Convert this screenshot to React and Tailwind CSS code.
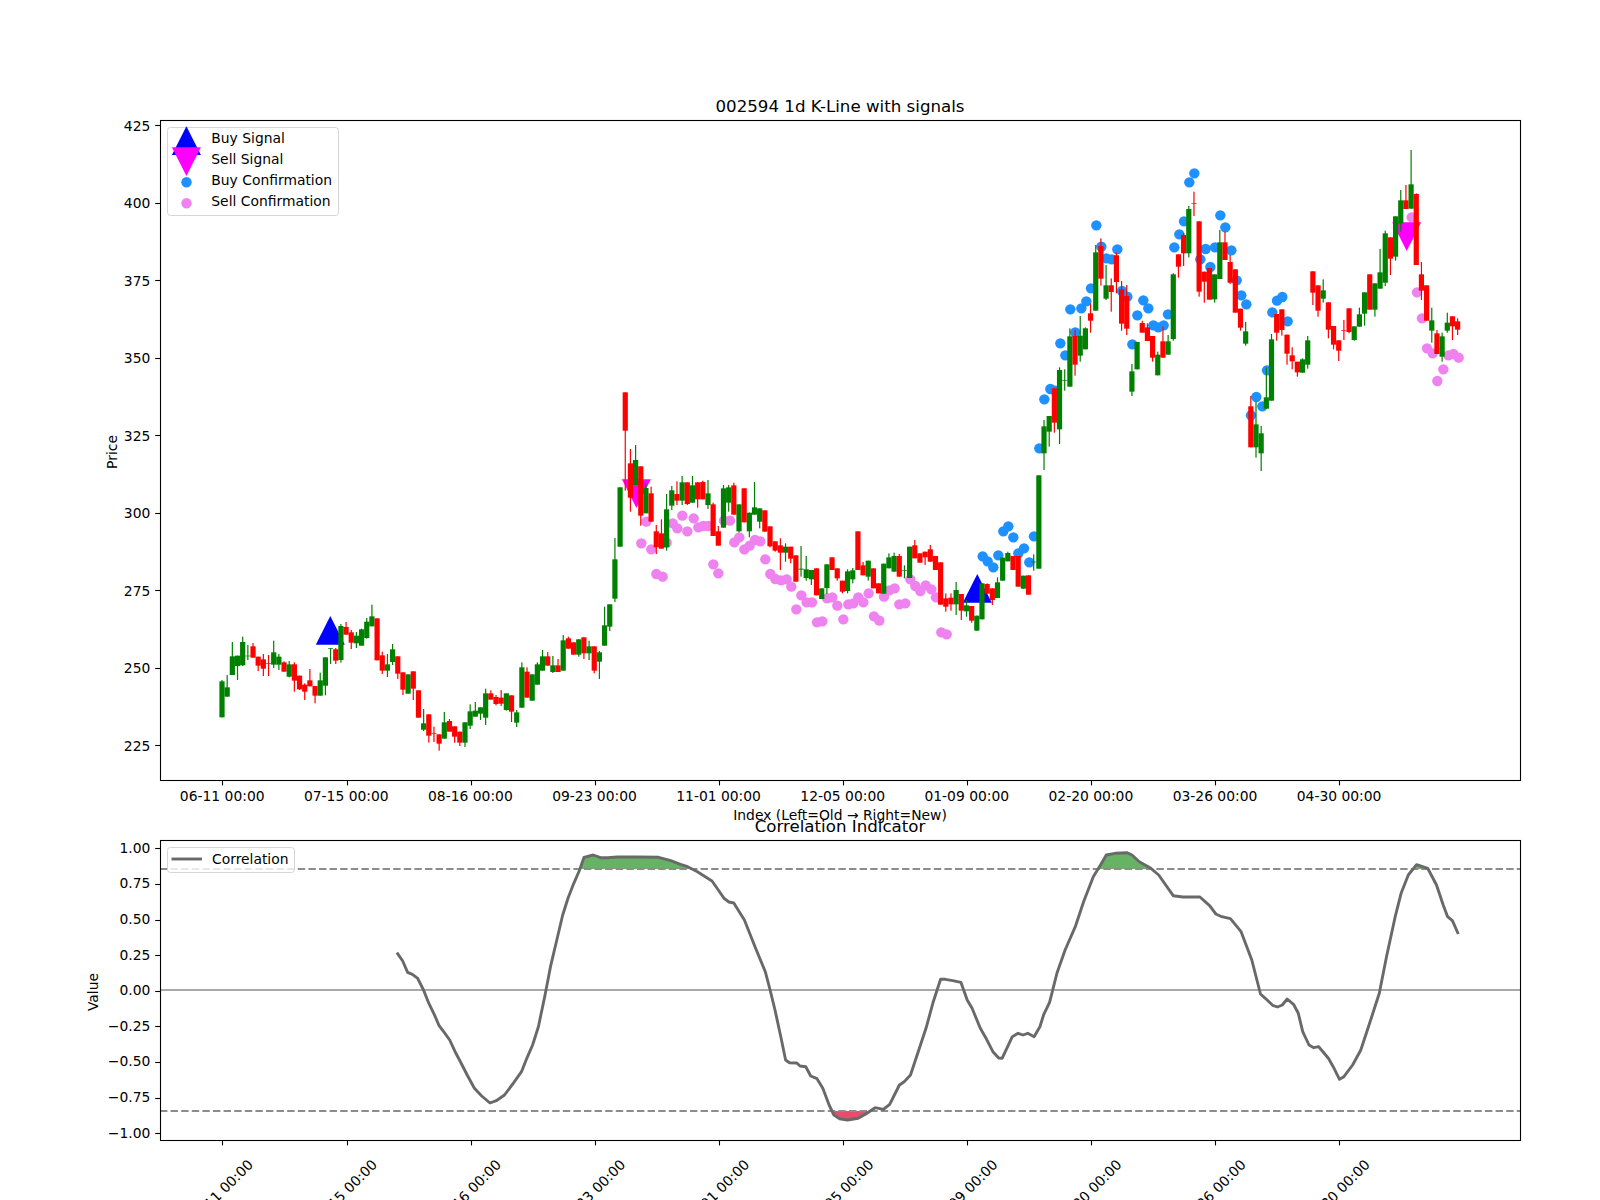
// Matplotlib-style K-line chart with signals, and the correlation indicator below it.
// Series are read off the picture in crop pixels (3x) and converted in the helpers.

const G = "#008000";
const R = "#ff0000";

// candles: [color, bodyTop, bodyBottom, wickTop, wickBottom]
const CANDLES_A = [
  [G,754,862,750,862],[G,772,800,735,800],[G,679,735,636,735],[G,677,708,677,750],[G,636,706,620,708],
  [G,677,679,645,690],[R,649,683,639,683],[R,680,707,680,723],[R,688,716,672,738],[R,700,702,675,738],
  [G,667,704,632,714],[G,680,704,672,720],[R,697,725,694,725],[G,703,740,693,742],[R,703,752,697,785],
  [R,737,778,737,780],[R,764,785,760,810],[R,751,769,717,769],[R,768,797,768,820],[G,751,797,728,797],
  [G,682,767,682,796],[G,654,656,654,702],[R,658,692,654,702],[G,588,690,582,698],[R,591,614,576,614],
  [R,607,638,600,657],[G,617,640,606,654],[G,598,647,596,647],[G,575,624,564,626],[G,559,589,524,589],
  [R,565,691,565,691],[R,676,722,665,732],[G,703,722,672,741],[G,658,696,642,705],[R,679,731,679,747],
  [R,727,779,727,795],[G,733,791,733,791],[R,724,776,724,810],[R,781,863,781,863],[G,880,899,837,903],
  [R,853,917,853,938],[R,910,912,890,936],[R,913,941,913,962],[G,877,926,846,926],[R,873,905,867,905],
  [R,889,920,889,938],[R,905,938,905,948],[G,877,938,877,951],[G,844,887,823,897],[G,842,860,816,860],
  [G,832,851,832,870],[G,790,863,776,885],[R,790,809,781,809],[R,801,822,795,826],[R,803,821,780,828],
  [G,790,840,790,842],[R,796,845,796,876],[G,847,878,840,891],[G,712,833,697,833],[R,725,803,712,803],
  [G,733,812,733,812],[G,703,764,697,764],[G,679,722,660,722],[R,679,707,666,707],[G,706,726,678,729],
  [R,706,726,687,726],[G,631,722,615,722],[R,625,656,620,656],[R,637,674,637,674],[G,628,674,628,680],
  [R,622,670,622,687],[G,649,670,632,690],[R,649,722,649,730],[G,667,695,663,747],[G,586,647,530,647],
  [G,523,590,523,603],[G,388,506,324,516],[G,172,350,172,350],
];
const CANDLES_B = [
  [R,67,182,67,362],[R,280,383,237,425],[G,270,345,225,345],[R,289,437,289,467],[G,354,430,340,430],
  [R,370,455,350,455],[R,484,532,465,552],[R,490,536,448,536],[G,418,532,372,542],[G,361,407,348,420],
  [R,372,392,334,405],[G,337,392,318,405],[R,337,402,337,405],[G,346,398,318,398],[R,337,388,337,413],
  [R,336,388,332,388],[G,370,405,330,417],[R,403,498,398,498],[R,484,527,468,527],[G,355,473,345,473],
  [G,352,398,345,425],[R,346,434,338,434],[G,403,484,403,487],[R,355,457,355,457],[G,428,484,428,502],
  [G,412,434,336,434],[G,415,455,415,475],[R,421,485,421,485],[R,469,529,469,532],[R,514,542,514,545],
  [R,526,548,505,600],[G,530,548,520,575],[R,530,566,530,580],[R,556,635,556,635],[G,596,599,528,620],
  [G,598,624,558,632],[G,600,628,600,645],[R,595,676,595,676],[G,655,687,655,687],[G,583,654,583,672],
  [R,562,600,562,600],[R,595,625,595,632],[R,632,665,632,670],[G,604,663,598,670],[G,601,628,594,640],
  [R,484,600,484,600],[R,586,616,576,616],[G,572,620,572,632],[R,595,655,595,655],[R,640,670,640,670],
  [G,581,671,581,671],[G,562,595,550,595],[G,558,605,548,605],[R,558,620,552,620],[G,600,602,586,625],
  [G,530,624,530,624],[R,526,565,510,565],[R,550,578,550,578],[R,545,562,545,585],[R,538,575,525,575],
  [R,558,600,558,600],[R,577,704,577,704],[R,685,710,670,725],[R,683,703,670,722],[G,660,703,636,735],
  [R,672,722,672,750],[G,706,724,690,740],[R,708,752,708,758],[G,737,782,737,782],[G,640,748,640,748],
  [R,642,671,640,671],[R,655,690,655,705],[G,637,684,622,684],[G,563,632,563,632],[G,549,574,545,574],
  [R,558,600,558,600],[R,558,650,558,650],[G,617,656,617,656],[R,616,674,616,674],[G,575,577,553,602],
  [G,316,596,316,596],[G,169,250,150,300],
];
const CANDLES_C = [
  [G,828,875,828,920],[R,745,848,745,878],[G,690,868,682,912],[G,720,722,688,752],[G,589,740,565,740],
  [R,588,674,570,707],[G,587,647,528,665],[G,565,628,562,628],[R,520,542,490,578],[G,337,512,315,512],
  [R,318,416,295,437],[G,436,476,375,480],[R,436,456,415,515],[R,346,426,337,460],[R,448,551,423,572],
  [R,468,566,435,585],[G,694,755,672,768],[G,606,688,606,688],[R,549,578,542,578],[R,562,603,550,603],
  [R,588,653,588,665],[G,644,706,635,706],[R,604,653,560,653],[G,604,644,585,644],[G,403,597,400,602],
  [R,343,380,343,413],[R,285,340,280,378],[G,207,340,198,352],[R,190,192,155,228],[R,244,455,244,470],
  [R,395,425,395,488],[R,384,479,384,479],[G,403,478,403,488],[G,307,417,270,417],[R,307,360,275,360],
  [R,366,428,345,432],[R,388,518,388,518],[R,506,563,506,572],[G,574,611,546,617],[R,799,922,768,922],
  [G,853,922,785,953],[G,880,940,858,993],[G,772,806,682,806],[G,598,782,582,782],[R,522,578,522,602],
  [R,508,570,508,587],[R,584,641,584,674],[R,646,664,622,688],[R,665,697,665,710],[G,658,698,655,698],
  [G,601,674,588,686],[R,394,458,394,495],[R,436,512,436,530],[G,451,476,418,488],[R,487,569,487,595],
  [R,558,614,558,628],[R,601,632,601,663],[R,570,572,540,600],[R,505,576,505,580],[G,559,600,559,602],
  [G,523,560,503,560],[G,457,521,457,557],[R,403,509,403,509],[G,430,509,430,530],[G,397,446,327,446],
  [G,280,428,272,438],[R,292,356,292,405],[G,229,350,229,362],[G,181,250,150,275],[R,181,207,135,207],
  [G,133,206,30,206],[R,162,375,160,375],[R,403,452,366,480],[R,436,542,436,542],[G,541,572,503,608],
  [R,580,642,570,642],[G,589,650,578,665],[G,548,572,518,578],[R,529,559,529,600],[R,544,569,535,585],
];

const candles = [
  ...CANDLES_A.map((c) => toAbs(c, 430)),
  ...CANDLES_B.map((c) => toAbs(c, 370)),
  ...CANDLES_C.map((c) => toAbs(c, 140)),
];

function toAbs([color, top, bottom, wickTop, wickBottom], originY) {
  const y = (v) => originY + v / 3;
  return { color, top: y(top), bottom: y(bottom), wickTop: y(wickTop), wickBottom: y(wickBottom) };
}

const crop = (pts, ox, oy) => pts.map(([x, y]) => [ox + x / 3, oy + y / 3]);

const buyDots = [
  ...crop([[1148,559],[1163,574],[1180,592],[1195,556],[1210,484],[1225,469],[1240,502],[1255,550],[1272,535],[1288,577],[1302,499]], 600, 370),
  ...crop([
    [58,925],[73,778],[91,747],[106,752],[121,610],[136,646],[151,508],[166,577],[184,505],[199,484],[213,445],[229,256],
    [244,320],[259,355],[275,358],[292,328],[306,453],[322,470],[337,613],[352,526],[370,481],[385,505],[400,556],[415,562],
    [431,556],[444,523],[463,322],[478,283],[492,244],[508,127],[523,100],[541,358],[557,327],[571,381],[585,322],[601,226],
    [616,262],[634,331],[650,421],[664,466],[679,493],[693,826],[709,771],[727,799],[741,691],[757,517],[771,482],[787,471],[803,544],
  ], 1020, 140),
];

const sellDots = [
  ...crop([
    [124,520],[139,455],[154,538],[169,612],[188,620],[200,518],[218,460],[232,475],[247,437],[262,484],[281,445],[295,472],
    [310,468],[325,468],[340,583],[355,610],[372,452],[390,452],[403,517],[418,502],[433,538],[449,527],[465,510],[481,514],
    [496,568],[511,612],[526,627],[543,631],[560,628],[574,650],[589,718],[604,676],[620,697],[636,697],[651,757],[667,754],
    [681,685],[697,682],[712,707],[730,748],[745,703],[760,700],[775,682],[790,697],[806,670],[822,739],[838,752],[852,680],
    [868,661],[884,655],[898,703],[916,700],[931,628],[946,648],[961,663],[977,646],[994,658],[1008,682],[1024,787],[1040,793],
  ], 600, 370),
  ...crop([[1175,232],[1191,457],[1206,535],[1221,625],[1238,640],[1252,723],[1270,688],[1285,646],[1300,642],[1316,653]], 1020, 140),
];

// correlation line, two crops at 2.063x horizontally and 3x vertically
const lineCrop = (pts, ox) => pts.map(([x, y]) => [ox + x / 2.063, 770 + y / 3]);
const corr = [
  ...lineCrop([
    [695,548],[707,573],[717,607],[727,613],[738,625],[750,660],[760,697],[772,733],[782,767],[793,788],[804,810],[815,845],
    [826,875],[840,915],[855,955],[870,978],[887,999],[900,992],[917,975],[935,940],[952,905],[963,865],[975,825],[987,770],
    [1000,680],[1012,590],[1025,510],[1037,435],[1048,385],[1060,340],[1072,300],[1081,262],[1100,255],[1115,263],[1130,263],
    [1150,261],[1190,261],[1235,262],[1260,272],[1280,283],[1295,290],[1315,305],[1345,333],[1358,360],[1370,385],[1380,396],
    [1390,399],[1412,450],[1435,535],[1455,605],[1465,660],[1475,720],[1487,800],[1497,870],[1505,878],[1520,879],
  ], 60),
  ...lineCrop([
    [0,888],[12,890],[22,918],[35,926],[47,955],[60,1005],[70,1035],[82,1046],[98,1050],[120,1045],[135,1033],[155,1013],
    [172,1018],[185,1003],[205,945],[215,935],[228,915],[245,840],[260,775],[275,695],[290,628],[300,628],[315,632],[332,637],
    [345,690],[355,715],[372,775],[385,808],[398,845],[410,864],[417,865],[438,800],[450,790],[460,795],[470,790],[483,800],
    [495,770],[503,733],[515,697],[530,610],[547,540],[568,470],[585,395],[605,320],[620,285],[632,255],[650,250],[675,248],
    [685,255],[700,275],[722,293],[740,315],[770,377],[790,381],[825,381],[845,407],[858,432],[870,440],[888,446],[910,485],
    [932,570],[950,672],[960,685],[975,706],[985,711],[995,705],[1005,687],[1018,703],[1028,730],[1037,785],[1050,825],
    [1060,833],[1070,830],[1090,865],[1100,890],[1113,928],[1122,920],[1140,885],[1157,840],[1175,760],[1195,670],[1210,560],
    [1228,440],[1240,370],[1255,315],[1272,284],[1295,295],[1313,345],[1327,405],[1336,440],[1346,452],[1358,492],
  ], 800),
];
const corrPoints = corr.map(([x, y]) => `${x.toFixed(1)},${y.toFixed(1)}`).join(" ");

const candleX = (i) => 222 + 5.17 * i;
const tickXs = Array.from({ length: 10 }, (_, i) => 222.4 + 124.1 * i);
const dates = ["06-11 00:00", "07-15 00:00", "08-16 00:00", "09-23 00:00", "11-01 00:00", "12-05 00:00", "01-09 00:00", "02-20 00:00", "03-26 00:00", "04-30 00:00"];
const priceTicks = [225, 250, 275, 300, 325, 350, 375, 400, 425];
const priceY = (p) => 125.3 + (425 - p) * 3.1;
const valueTicks = [-1, -0.75, -0.5, -0.25, 0, 0.25, 0.5, 0.75, 1];
const valueY = (v) => 990.8 - v * 142.5;
const fmtValue = (v) => (v < 0 ? "\u2212" : "") + Math.abs(v).toFixed(2);
const snap = (v) => Math.round(v) + 0.5;

function Triangle({ x, y, up, color }) {
  // x is the centre, y the flat side
  const tip = up ? y - 28.7 : y + 28.7;
  return <polygon points={`${x - 14.5},${y} ${x + 14.5},${y} ${x},${tip}`} fill={color} />;
}

function Frame({ top, bottom }) {
  return (
    <>
      <rect x="160.5" y={top + 0.5} width="1360" height={bottom - top} fill="none" stroke="#000" strokeWidth="1.1" />
      {tickXs.map((x) => (
        <line key={x} x1={snap(x)} x2={snap(x)} y1={bottom} y2={bottom + 5.4} stroke="#000" strokeWidth="1.1" />
      ))}
    </>
  );
}

function YTick({ y, label, drop }) {
  return (
    <g>
      <line x1="155.2" x2="160" y1={snap(y)} y2={snap(y)} stroke="#000" strokeWidth="1.1" />
      <text x="150.3" y={y + drop} textAnchor="end" fontSize="13.89">{label}</text>
    </g>
  );
}

function KLinePanel() {
  return (
    <svg width="1600" height="812" viewBox="0 0 1600 812" className="block overflow-visible">
      <text x="840" y="111.7" textAnchor="middle" fontSize="16.67">002594 1d K-Line with signals</text>

      {buyDots.map(([x, y], i) => <circle key={i} cx={x} cy={y} r="5.2" fill="#1e90ff" />)}
      {sellDots.map(([x, y], i) => <circle key={i} cx={x} cy={y} r="5.2" fill="#ee82ee" />)}
      <Triangle x={330.3} y={644.7} up color="#0000ff" />
      <Triangle x={977.3} y={602.7} up color="#0000ff" />
      <Triangle x={636.4} y={479.3} color="#ff00ff" />
      <Triangle x={1406.7} y={222.3} color="#ff00ff" />

      {candles.map((c, i) => {
        const x = candleX(i);
        return (
          <g key={i} fill={c.color}>
            <rect x={x - 0.6} y={c.wickTop} width="1.2" height={c.wickBottom - c.wickTop} />
            <rect x={x - 2.6} y={c.top} width="5.2" height={c.bottom - c.top} />
          </g>
        );
      })}

      <Frame top={120} bottom={780} />
      {priceTicks.map((p) => <YTick key={p} y={priceY(p)} label={p} drop={5.4} />)}
      {dates.map((d, i) => (
        <text key={d} x={tickXs[i] - 0.2} y="801.3" textAnchor="middle" fontSize="13.89">{d}</text>
      ))}
      <text x="840" y="820" textAnchor="middle" fontSize="13.89">Index (Left=Old → Right=New)</text>
      <text transform="translate(116.5 452) rotate(-90)" textAnchor="middle" fontSize="13.89">Price</text>

      <rect x="167.5" y="127.5" width="171" height="88" rx="3" fill="#fff" fillOpacity="0.8" stroke="#ccc" strokeOpacity="0.8" />
      <Triangle x={186.4} y={155} up color="#0000ff" />
      <Triangle x={186.4} y={147.3} color="#ff00ff" />
      <circle cx="186.5" cy="182.3" r="5.2" fill="#1e90ff" />
      <circle cx="186.5" cy="203.3" r="5.2" fill="#ee82ee" />
      <text x="211.3" y="143" fontSize="13.89">Buy Signal</text>
      <text x="211.3" y="164" fontSize="13.89">Sell Signal</text>
      <text x="211.3" y="185" fontSize="13.89">Buy Confirmation</text>
      <text x="211.3" y="206" fontSize="13.89">Sell Confirmation</text>
    </svg>
  );
}

function CorrelationPanel() {
  return (
    <svg width="1600" height="388" viewBox="0 812 1600 388" className="block overflow-visible">
      <defs>
        <clipPath id="above-high"><rect x="160" y="840" width="1360" height="29" /></clipPath>
        <clipPath id="below-low"><rect x="160" y="1111" width="1360" height="29" /></clipPath>
      </defs>

      <text x="840" y="831.7" textAnchor="middle" fontSize="16.67">Correlation Indicator</text>

      <polygon points={corrPoints} fill="#008000" fillOpacity="0.6" clipPath="url(#above-high)" />
      <polygon points={corrPoints} fill="#dc143c" fillOpacity="0.75" clipPath="url(#below-low)" />
      <line x1="160" x2="1520" y1="869" y2="869" stroke="#8c8c8c" strokeWidth="2.2" strokeDasharray="7.4 3.2" />
      <line x1="160" x2="1520" y1="1111" y2="1111" stroke="#8c8c8c" strokeWidth="2.2" strokeDasharray="7.4 3.2" />
      <line x1="160" x2="1520" y1="990" y2="990" stroke="#a9a9a9" strokeWidth="2" />
      <polyline points={corrPoints} fill="none" stroke="#696969" strokeWidth="2.9" strokeLinejoin="round" />

      <Frame top={840} bottom={1140} />
      {valueTicks.map((v) => <YTick key={v} y={valueY(v)} label={fmtValue(v)} drop={4.4} />)}
      {dates.map((d, i) => (
        <text key={d} transform={`rotate(-45 ${tickXs[i] - 2} 1192)`} x={tickXs[i] - 2} y="1197" textAnchor="middle" fontSize="13.89">{d}</text>
      ))}
      <text transform="translate(98 992) rotate(-90)" textAnchor="middle" fontSize="13.89">Value</text>

      <rect x="167.5" y="847.5" width="127" height="25" rx="3" fill="#fff" fillOpacity="0.8" stroke="#ccc" strokeOpacity="0.8" />
      <line x1="171.5" x2="202" y1="859" y2="859" stroke="#696969" strokeWidth="2.9" />
      <text x="212" y="864" fontSize="13.89">Correlation</text>
    </svg>
  );
}

export default function App() {
  return (
    <div className="flex h-[1200px] w-[1600px] flex-col overflow-hidden bg-white font-['DejaVu_Sans',sans-serif] text-black">
      <KLinePanel />
      <CorrelationPanel />
    </div>
  );
}
